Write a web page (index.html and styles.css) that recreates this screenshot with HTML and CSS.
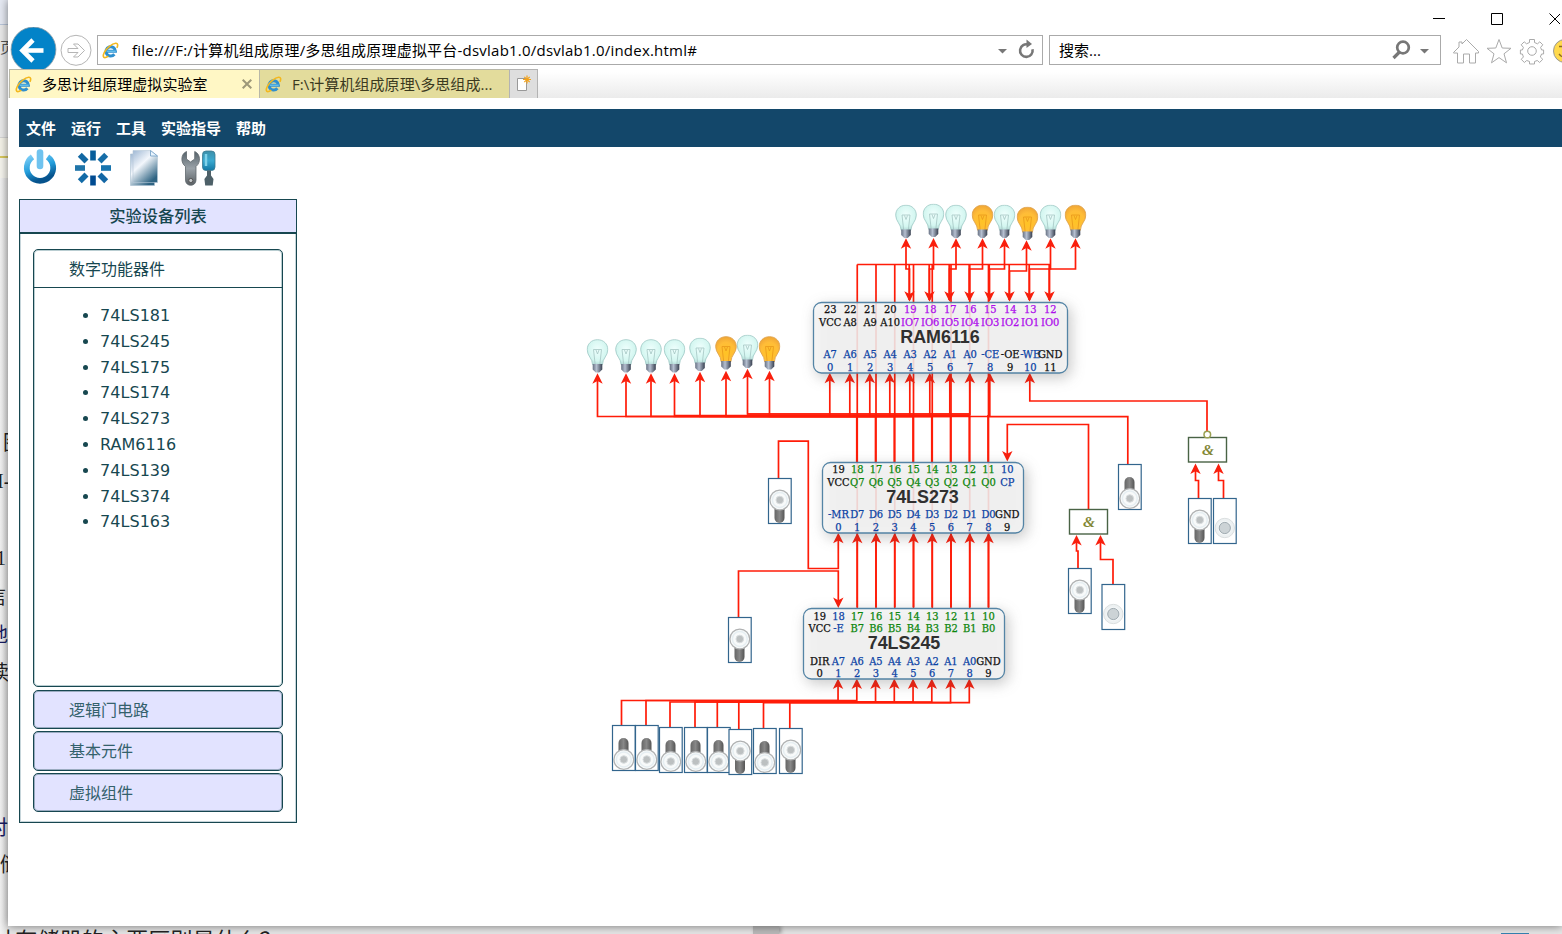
FILE: index.html
```
<!DOCTYPE html>
<html lang="zh-CN">
<head>
<meta charset="utf-8">
<title>多思计组原理虚拟实验室</title>
<link rel="stylesheet" href="styles.css">
</head>
<body>
<svg class="defs" width="0" height="0">
  <defs>
    <linearGradient id="blue" x1="0" y1="0" x2=".4" y2="1"><stop offset="0" stop-color="#7ccdf6"/><stop offset=".55" stop-color="#239edc"/><stop offset="1" stop-color="#06538d"/></linearGradient>
    <linearGradient id="steel" x1="0" y1="0" x2="0" y2="1"><stop offset="0" stop-color="#56636b"/><stop offset=".5" stop-color="#9aa2a8"/><stop offset="1" stop-color="#5a6064"/></linearGradient>
    <linearGradient id="page" x1="0" y1="0" x2=".7" y2="1"><stop offset="0" stop-color="#9fb8d4"/><stop offset=".45" stop-color="#f3f7fc"/><stop offset="1" stop-color="#2f6483"/></linearGradient>
    <linearGradient id="driver" x1="0" y1="0" x2="0" y2="1"><stop offset="0" stop-color="#3d8fa9"/><stop offset=".5" stop-color="#3aa9d0"/><stop offset="1" stop-color="#1278a5"/></linearGradient>
    <radialGradient id="glassOff" cx=".5" cy=".4" r=".6"><stop offset="0" stop-color="#effffd"/><stop offset=".75" stop-color="#d3f6f0"/><stop offset="1" stop-color="#b5dcd8"/></radialGradient>
    <radialGradient id="glassOn" cx=".5" cy=".65" r=".7"><stop offset="0" stop-color="#ffc324"/><stop offset=".6" stop-color="#ffbd38"/><stop offset="1" stop-color="#eda136"/></radialGradient>
    <linearGradient id="cap" x1="0" x2="1"><stop offset="0" stop-color="#687284"/><stop offset=".4" stop-color="#b5bfd0"/><stop offset="1" stop-color="#394151"/></linearGradient>
    <linearGradient id="slot" x1="0" x2="1"><stop offset="0" stop-color="#666"/><stop offset=".5" stop-color="#888"/><stop offset="1" stop-color="#555"/></linearGradient>
    <symbol id="ie" viewBox="0 0 18 18"><path d="M4.800 9.800h9.400a5 4.900 0 1 0-1.100 3.200" fill="none" stroke="#2f8fce" stroke-width="3.200"/><path d="M5 9.800h9.500" stroke="#62bdeb" stroke-width="1.600"/><path d="M15.800 6.300c1.500-3.200.900-5.200-1.300-5C10.600 1.700 4.800 6.500 2.500 11c-1.900 3.700-1.300 6 1.300 5.400 1-.200 2-.800 2.900-1.400" fill="none" stroke="#f3b81e" stroke-width="1.700"/></symbol>
    <symbol id="bulb-off" viewBox="0 0 22 34"><path d="M11 .7C4.800.700.700 5.100.700 10.700c0 6.200 5.300 8.600 5.400 15h9.800c.100-6.400 5.400-8.800 5.400-15C21.300 5.100 17.200.700 11 .700z" fill="url(#glassOff)" stroke="#a5cdca" stroke-width=".9"/><path d="M8.600 25 7 10.500h8L13.400 25M9.500 11l1.500 4 1.500-4" fill="none" stroke="#a5c5c3" stroke-width=".8"/><path d="M6.200 25h9.600v5.400L12.700 33.500H9.300L6.200 30.400z" fill="url(#cap)"/></symbol>
    <symbol id="bulb-on" viewBox="0 0 22 34"><path d="M11 .7C4.800.700.700 5.100.700 10.700c0 6.200 5.300 8.600 5.400 15h9.800c.100-6.400 5.400-8.800 5.400-15C21.300 5.100 17.200.700 11 .700z" fill="url(#glassOn)" stroke="#dfa34c" stroke-width=".9"/><path d="M8.600 25 7 10.500h8L13.400 25M9.500 11l1.500 4 1.500-4" fill="none" stroke="#e8981a" stroke-width=".8"/><path d="M6.200 25h9.600v5.400L12.700 33.500H9.300L6.200 30.400z" fill="url(#cap)"/></symbol>
    <symbol id="knob" viewBox="-11 -11 22 22"><circle r="9.900" fill="#f8fafa" stroke="#b0b2b3" stroke-width="1.300"/><circle r="7.400" fill="none" stroke="#e6eef2" stroke-width="1.500"/><circle r="3.800" fill="#bcc0c1" stroke="#d8dcde"/></symbol>
    <symbol id="push" viewBox="-11 -11 22 22"><circle r="9.700" fill="#edf1f2" stroke="#dadedf"/><circle r="6.900" fill="#f4f7f8"/><circle r="5.600" fill="#ccd3d6" stroke="#a0abb1"/></symbol>
  </defs>
</svg>

<div class="desktop">
  <div class="desktop-head"></div>
  <div class="desktop-line"></div>
  <span class="frag small" style="top:38px;left:0">页</span>
  <span class="frag" style="top:429px;left:3px">图</span>
  <span class="frag" style="top:467px;left:-3px">I-</span>
  <span class="frag" style="top:544px;left:-4px">1</span>
  <span class="frag" style="top:583px;left:-14px">信</span>
  <span class="frag navy" style="top:621px;left:-12px">地</span>
  <span class="frag" style="top:659px;left:-11px">读</span>
  <span class="frag navy" style="top:814px;left:-12px">对</span>
  <span class="frag" style="top:851px;left:0">储</span>
  <span class="frag below" style="top:926px;left:-7px">址存储器的主要区别是什么？</span>
  <div class="desktop-scroll"></div>
  <div class="desktop-mark"></div>
</div>

<div class="window">
  <header class="chrome">
    <div class="caption">
      <svg width="133" height="16" viewBox="0 0 133 16" fill="none" stroke="#000"><path d="M6 6.500h12M64.500 1.500h11v11h-11zM122.500 1.500l11 11M133.500 1.500l-11 11"/></svg>
    </div>
    <div class="address-row">
      <svg class="nav" width="88" height="44" viewBox="0 0 88 44"><circle cx="25.500" cy="22.500" r="22.400" fill="#0383c8" stroke="#8a9ba5" stroke-width=".8"/><path d="M35.500 23.500H15" stroke="#fff" stroke-width="4.600"/><path d="M25 13 14.500 23.500 25 34" fill="none" stroke="#fff" stroke-width="4.600"/><circle cx="68" cy="23.300" r="15" fill="#fff" stroke="#b5b5b5"/><path d="M60 21.500h10l-4.500-4.500H70l6.500 6.500L70 30h-4.500l4.500-4.500H60z" fill="#fff" stroke="#b5b5b5"/></svg>
      <div class="field address">
        <svg width="17" height="17"><use href="#ie"/></svg>
        <span class="url">file:///F:/计算机组成原理/多思组成原理虚拟平台-dsvlab1.0/dsvlab1.0/index.html#</span>
        <svg width="42" height="22" viewBox="0 0 42 22"><path d="M2 10h9l-4.500 4.500z" fill="#777"/><path d="M32.500 5.700a6.300 6.300 0 1 0 4 4.600" fill="none" stroke="#777" stroke-width="2.600"/><path d="M30.500.500v8.500l5.500-4z" fill="#777"/></svg>
      </div>
      <div class="field search">
        <span>搜索...</span>
        <svg width="42" height="22" viewBox="2 0 42 22"><circle cx="13" cy="8.500" r="5.800" fill="none" stroke="#777" stroke-width="2.700"/><path d="M9.500 13 3.500 19" stroke="#777" stroke-width="3.200"/><path d="M30 10h9l-4.500 4.500z" fill="#777"/></svg>
      </div>
      <svg class="tools" width="112" height="30" viewBox="1450 36 112 30" fill="#fff" stroke="#aaa"><path d="M1453.500 52.500 1459 47v-5h3v2l4.500-4.500 12 12v1.500h-3v10h-6v-9h-6v9h-6v-10h-4z"/><path d="m1499 39.500 3.200 8.500 8.800.300-7 5.500 2.500 9-7.500-5.200-7.500 5.200 2.500-9-7-5.500 8.800-.300z"/><path d="M1529.500 42.500v-3h5v3l3 1.300 2.300-2 3 3-2.200 2.600 1 2.600h2v4h-2l-1.300 3 2.500 2.300-3.200 3.200-2.300-2-2.800 1v2.500h-5v-2.500l-2.800-1-2.300 2-3.200-3.200 2.200-2.300-1-3h-2v-4h2l1-2.600-2.200-2.600 3-3 2.300 2z"/><circle cx="1532" cy="51" r="4.300"/><circle cx="1565" cy="51" r="11.500" fill="#ffd94d" stroke="#999"/><path d="M1559 46.500h4M1559 54q3 4 7 3" fill="none" stroke="#8a6724" stroke-width="1.300"/></svg>
    </div>
    <div class="tabs">
      <div class="tab active"><svg width="17" height="17"><use href="#ie"/></svg><span>多思计组原理虚拟实验室</span><svg class="close" width="10" height="10" viewBox="0 0 10 10"><path d="m.7.700 8.600 8.600M9.300.700.700 9.300" stroke="#9d9879" stroke-width="2"/></svg></div>
      <div class="tab"><svg width="17" height="17"><use href="#ie"/></svg><span>F:\计算机组成原理\多思组成...</span></div>
      <div class="newtab"><svg width="16" height="18" viewBox="0 0 16 18"><path d="M1.500 3.500h9v12h-9z" fill="#fff" stroke="#999"/><path d="M11 .500v8M7 4.500h8M8.300 1.800l5.400 5.400M13.700 1.800 8.300 7.200" stroke="#f3a21a" stroke-width="1.200"/></svg></div>
    </div>
  </header>

  <main class="page">
    <nav class="menu"><span>文件</span><span>运行</span><span>工具</span><span>实验指导</span><span>帮助</span></nav>
    <div class="body">
      <div class="left">
        <div class="toolbar">
          <svg width="34" height="38" viewBox="0 0 34 38"><path d="M9.500 7.800a13.200 13.200 0 1 0 15 0" fill="none" stroke="url(#blue)" stroke-width="5.800"/><path d="M17 2v17" stroke="#fff" stroke-width="9"/><path d="M17 3.500V17" stroke="#70c3ef" stroke-width="6.600" stroke-linecap="round"/></svg>
          <svg width="36" height="38" viewBox="-18 -19 36 38" stroke-width="5.600"><g stroke="#075e9b"><path d="M0-17.500v10"/><path d="M13.200-13.200 6.500-6.500" stroke="#176ea8"/><path d="M18 0H8" stroke="#1774ae"/><path d="M13.200 13.200 6.500 6.500" stroke="#1467a5"/><path d="M0 17.500v-10" stroke="#004b91"/><path d="M-13.200 13.200-6.500 6.500" stroke="#126ba7"/><path d="M-18 0H-8" stroke="#2075a9"/><path d="M-13.200-13.200-6.500-6.500" stroke="#1268a3"/></g></svg>
          <svg width="30" height="38" viewBox="0 0 30 38"><path d="M1.500 5h20l4 4v27.500h-24z" fill="url(#page)" stroke="#a9c0d0" stroke-width=".6"/><path d="M4 1.500h17.500L28.500 7v26.500H4z" fill="url(#page)" stroke="#b5c8d6" stroke-width=".6"/><path d="M21.500 1.500V7h7z" fill="#eaf5fe" stroke="#6d9cc4" stroke-width=".8"/></svg>
          <svg width="36" height="38" viewBox="0 0 36 38"><path d="M5.500 2.500v7.500l4 3 4.200-3V2.500c6 2.500 6.300 11 1.300 15v13.500c0 7-10.500 7-10.500 0V17.500C-.500 14-.500 5 5.500 2.500z" fill="url(#steel)" stroke="#60686d" stroke-width=".8"/><circle cx="9.800" cy="31.500" r="2.100" fill="#c3c8ca" stroke="#555"/><rect x="21.500" y="2" width="12.500" height="19.500" rx="3.500" fill="url(#driver)" stroke="#3b7a90" stroke-width=".8"/><path d="M25 5v12" stroke="#7fd2ea" stroke-width="2.500"/><path d="M26 21.500h4v5l2.500 3.500-.8 6.500h-7.500l-.8-6.500 2.600-3.500z" fill="#4d6068"/></svg>
        </div>
        <aside class="panel">
          <h2>实验设备列表</h2>
          <div class="accordion">
            <section class="open"><h3>数字功能器件</h3>
              <ul><li>74LS181</li><li>74LS245</li><li>74LS175</li><li>74LS174</li><li>74LS273</li><li>RAM6116</li><li>74LS139</li><li>74LS374</li><li>74LS163</li></ul>
            </section>
            <h3 class="shut">逻辑门电路</h3>
            <h3 class="shut">基本元件</h3>
            <h3 class="shut">虚拟组件</h3>
          </div>
        </aside>
      </div>
      <svg class="canvas" id="canvas" width="1265" height="779" viewBox="297 147 1265 779"></svg>
    </div>
  </main>
</div>
<script src="script.js"></script>
</body>
</html>
```
FILE: styles.css
```
* { box-sizing: border-box; }
body { margin: 0; width: 1562px; height: 934px; overflow: hidden; position: relative; background: #e8e8e8; font-family: "Open Sans", "Noto Sans CJK SC", sans-serif; }
.defs { position: absolute; }
.desktop { position: absolute; inset: 0; overflow: hidden; background: linear-gradient(90deg, #f3f3f3, #e2e2e2 8px, #e6e6e6 9px); }
.desktop-head { height: 138px; background: linear-gradient(#e6eaf3 0 24px, #b9c6da 24px 25px, #eaeaea 25px 137px, #d5d5d5 137px); }
.desktop-line { height: 40px; background: linear-gradient(#f5f3e9 0 18px, #d8c85e 18px 20px, #f6f5ee 20px); }
.frag { position: absolute; font: 20px/28px "Liberation Serif", "Noto Sans CJK SC", serif; color: #222; white-space: nowrap; }
.frag.small { font-size: 15px; line-height: 20px; color: #555; }
.frag.navy { color: #171b62; }
.frag.below { font-size: 22px; line-height: 30px; letter-spacing: .2px; }
.desktop-scroll { position: absolute; left: 753px; top: 926px; width: 26px; height: 8px; background: #bababa; box-shadow: 2px 0 4px #999; }
.desktop-mark { position: absolute; left: 1501px; top: 933px; width: 28px; height: 1px; background: #3683b2; }
.window { position: absolute; left: 8px; top: 0; width: 1554px; height: 926px; background: #fff; box-shadow: 0 0 9px rgba(0,0,0,.5); overflow: hidden; }
.chrome { height: 98px; display: flex; flex-direction: column; background: linear-gradient(#fff 72px, #ebebeb 98px); }
.caption { height: 27px; display: flex; justify-content: flex-end; padding-top: 12px; flex: none; }
.caption svg { display: block; margin-right: 2px; }
.address-row { display: flex; height: 42px; flex: none; overflow: hidden; }
.nav { flex: none; margin-right: 1px; }
.field { display: flex; align-items: center; height: 30px; margin-top: 8px; border: 1px solid #aaa; background: #fff; font-size: 15px; line-height: 28px; color: #000; }
.address { width: 946px; padding: 0 4px; }
.url { flex: 1; margin-left: 13px; white-space: nowrap; letter-spacing: .22px; }
.search { width: 392px; margin-left: 6px; padding: 0 6px 0 9px; justify-content: space-between; }
.tools { margin: 9px 0 0 9px; flex: none; }
.tabs { display: flex; height: 29px; padding-left: 1px; }
.tab { display: flex; align-items: center; width: 250px; border: 1px solid #b8b7a8; border-bottom: 0; border-right: 0; background: #e3dc9c; padding: 0 6px 0 5px; font-size: 15px; color: #3b391f; white-space: nowrap; }
.tab span { margin: -2px 0 0 10px; flex: 1; letter-spacing: .05px; }
.tab.active { background: #fff7c5; color: #000; }
.tab .close { margin-right: 1px; }
.newtab { width: 29px; border: 1px solid #b3b3b3; border-bottom: 0; background: #dedede; display: flex; align-items: center; justify-content: center; }
.page { padding: 11px 0 0 11px; }
.menu { display: flex; gap: 15px; height: 38px; padding-left: 7px; align-items: center; background: #13476a; color: #fff; font: bold 15px/38px "Noto Sans CJK SC", sans-serif; }
.body { display: flex; }
.left { width: 278px; flex: none; }
.toolbar { display: flex; height: 52px; padding: 2px 0 0 4px; }
.toolbar svg { margin-right: 18px; }
.toolbar svg:nth-child(3) { margin-right: 22px; }
.panel { height: 624px; border: 1px solid #174750; box-shadow: inset 0 0 0 1px #c6d5da; font-family: "DejaVu Sans", "Noto Sans CJK SC", sans-serif; color: #174750; }
.panel h2 { margin: 0; height: 34px; background: #e2e3ff; border-bottom: 2px solid #174750; text-align: center; font: 500 16.300px/30px "Noto Sans CJK SC", sans-serif; }
.accordion { padding: 15px 13px 0; display: flex; flex-direction: column; gap: 2px; }
.accordion h3 { margin: 0; padding-left: 35px; font: 16px/36px "Noto Sans CJK SC", sans-serif; }
.open { height: 438px; margin-bottom: 1px; border: 1px solid #174750; box-shadow: inset 0 0 0 1px #b9cdd1; border-radius: 5px; }
.open h3 { height: 38px; border-bottom: 1px solid #174750; }
.open ul { margin: 15px 0 0; padding: 0 0 0 66px; font-size: 16px; line-height: 25.800px; letter-spacing: .05px; }
.accordion .shut { height: 39px; border: 1px solid #174750; box-shadow: inset 0 0 0 1px #9aabc0; border-radius: 5px; background: #e2e3ff; color: #34616c; }
.accordion .shut:nth-of-type(2) { height: 40px; }
.canvas { display: block; flex: none; }
.wire { fill: none; stroke: #ff1c08; stroke-width: 1.700; }
.head { fill: #f91f0d; }
.chip { fill: #f7f7f7; fill-opacity: .83; stroke: #5484a5; stroke-width: 1.300; }
.shade { filter: drop-shadow(3px 4px 7px rgba(70,70,70,.34)); }
.pin { font: 11px "DejaVu Serif Condensed", "DejaVu Serif", serif; text-anchor: middle; stroke-width: .25; }
.black { fill: #111; stroke: #111; }
.blue { fill: #0c43a5; stroke: #0c43a5; }
.green { fill: #0c860c; stroke: #0c860c; }
.purple { fill: #ad0cec; stroke: #ad0cec; }
.name { font: bold 17.900px "Liberation Sans", sans-serif; fill: #303030; text-anchor: middle; }
.box { fill: #fff; stroke: #32658d; stroke-width: 1.200; }
.gate { fill: #fff; stroke: #496345; stroke-width: 1.400; }
.amp { font: bold italic 15.500px "Liberation Serif", serif; fill: #838737; text-anchor: middle; }
```
FILE: script.js
```
const canvas = document.getElementById('canvas');
const NS = 'http://www.w3.org/2000/svg';
function add(tag, attrs, text) {
  const node = document.createElementNS(NS, tag);
  for (const key in attrs) node.setAttribute(key, attrs[key]);
  if (text !== undefined) node.textContent = text;
  canvas.appendChild(node);
  return node;
}
function wire(...points) { add('polyline', { class: 'wire', points: points.join(' ') }); }
function up(x, y) { add('path', { class: 'head', d: `M${x} ${y}l5.200 10.500-5.200-2.700-5.200 2.700z` }); }
function down(x, y) { add('path', { class: 'head', d: `M${x} ${y}l5.200-10.500-5.200 2.700-5.200-2.700z` }); }

const ramX = i => 830.200 + 20 * i;
const regX = i => 838.500 + 18.750 * i;
const busX = i => 819.700 + 18.750 * i;

// Output lamps of the memory chip
const topLamps = [[906,205,0],[933.500,204,0],[956,205,0],[982.500,205,1],[1004.500,205,0],[1027.500,207,1],[1050.500,205,0],[1075.500,205,1]];
const topPins = [4, 5, 6, 7, 8, 9, 11, 10];
topLamps.forEach(([x, y], i) => {
  const target = ramX(topPins[i]) - .7;
  const bend = i === 5 ? 271 : 269;
  const end = i === 5 ? x - 1 : x;
  wire(end, y + 40, end, bend, target, bend, target, 300);
  up(end, i === 1 ? 238 : y + 33.200);
});
wire(857.200, 264.500, 1050, 264.500);
for (let i = 0; i < 8; i++) {
  wire(regX(i + 1), 264.500, regX(i + 1), 607);
  wire(ramX(i + 4) - 1, 264.500, ramX(i + 4) - 1, 300);
  down(ramX(i + 4) - .7, 301.800);
}

// Address lamps
const sideLamps = [[597.500,339.500,0],[626,339.500,0],[651,339.500,0],[674.500,339.500,0],[700,338,0],[726,336.500,1],[747.500,335,0],[769.500,336.500,1]];
sideLamps.forEach(([x, y], i) => {
  const rail = i === 6 ? 414 : 416.500;
  wire(x, y + 38, x, rail, regX(i + 1), rail);
  up(x, i === 7 || i === 5 ? 370.800 : y + 33.800);
});
wire(674, 415.500, 970, 415.500);
wire(747, 414, 970, 414);
for (let i = 0; i < 8; i++) {
  wire(ramX(i) - .4, 375, ramX(i) - .4, 415);
  up(ramX(i) - .4, 372.800);
  wire(regX(i + 1) - .5, 415, regX(i + 1) - .5, 462);
  wire(regX(i + 1), 535, regX(i + 1), 608);
  up(regX(i + 1), 532.800);
}

// Control lines
wire(1127.800, 464, 1127.800, 416.700, 989.800, 416.700, 989.800, 375); up(989.800, 372.800);
wire(1207, 431, 1207, 401, 1029.800, 401, 1029.800, 375); up(1029.800, 372.800);
wire(1088.500, 509, 1088.500, 424.500, 1007.300, 424.500, 1007.300, 456); down(1007.300, 461.500);
wire(778.500, 478, 778.500, 441.200, 808.300, 441.200, 808.300, 568.500, 838.300, 568.500, 838.300, 535); up(838.300, 532.800);
wire(738.500, 617, 738.500, 571, 838.300, 571, 838.300, 604); down(838.300, 608);
wire(1198.500, 498, 1198.500, 480.500, 1195.500, 480.500, 1195.500, 466); up(1195.500, 463.500);
wire(1223.500, 498, 1223.500, 480.500, 1218.500, 480.500, 1218.500, 466); up(1218.500, 463.500);
wire(1078, 568, 1078, 551, 1076.500, 551, 1076.500, 540); up(1076.500, 535);
wire(1113, 584, 1113, 559.500, 1100.500, 559.500, 1100.500, 540); up(1100.500, 535);

// Data switches
[621.500, 646, 670, 695, 717.300, 738.800, 763.500, 789.800].forEach((x, i) => {
  const rail = i < 2 ? 700.500 : i < 6 ? 702 : 702.700;
  const target = busX(i + 1) - .4;
  wire(x, 729, x, rail, target, rail, target, 682);
  up(target, 678.500);
});

function chip(x, y, width, name, titleX, pinX, top, bottom, rows) {
  add('rect', { class: 'chip shade', x, y, width, height: 70.500, rx: 8 });
  const line = (items, row, side) => items.forEach(([number, label, color], i) => {
    add('text', { class: 'pin ' + color, x: pinX(i), y: rows[row] }, side ? label : number);
    add('text', { class: 'pin ' + color, x: pinX(i), y: rows[row + 1] }, side ? number : label);
  });
  line(top, 0, false);
  line(bottom, 2, true);
  add('text', { class: 'name', x: titleX, y: rows[4] }, name);
}
const pins = (labels, colors, numberAt) => labels.split(' ').map((label, i) => [numberAt(i), label, { k: 'black', b: 'blue', g: 'green', p: 'purple' }[colors[i]]]);
chip(813.500, 302.500, 254, 'RAM6116', 940, ramX,
  pins('VCC A8 A9 A10 IO7 IO6 IO5 IO4 IO3 IO2 IO1 IO0', 'kkkkpppppppp', i => 23 - i),
  pins('A7 A6 A5 A4 A3 A2 A1 A0 -CE -OE -WE GND', 'bbbbbbbbbkbk', i => i), [313, 326, 358, 371, 343]);
chip(822.500, 462.500, 201, '74LS273', 922.500, regX,
  pins('VCC Q7 Q6 Q5 Q4 Q3 Q2 Q1 Q0 CP', 'kggggggggb', i => 19 - i),
  pins('-MR D7 D6 D5 D4 D3 D2 D1 D0 GND', 'bbbbbbbbbk', i => i), [473, 486, 518, 531, 503]);
chip(803.500, 608.500, 201, '74LS245', 904, busX,
  pins('VCC -E B7 B6 B5 B4 B3 B2 B1 B0', 'kbgggggggg', i => 19 - i),
  pins('DIR A7 A6 A5 A4 A3 A2 A1 A0 GND', 'kbbbbbbbbk', i => i), [620, 632, 665, 677, 649]);

[...topLamps, ...sideLamps].forEach(([x, y, on]) => add('use', { href: on ? '#bulb-on' : '#bulb-off', x: x - 11, y: y - .5, width: 22, height: 34 }));

function device(x, y, kind) {
  add('rect', { class: 'box', x: x + .5, y: y + .5, width: 22.700, height: 45 });
  if (kind !== 'push') add('rect', { x: x + 6.500, y: y + (kind === 'low' ? 13 : 25), width: 10, height: 20, rx: 5, fill: 'url(#slot)' });
  add('use', { href: kind === 'push' ? '#push' : '#knob', x: x + .800, y: y + (kind === 'low' ? 23.500 : kind === 'push' ? 19 : 11), width: 22, height: 22 });
}
[[612,725,'low'],[635,725,'low'],[659,727,'low'],[684,727,'low'],[707,727,'low'],[728.500,729,'high'],[753,728,'low'],[779,728,'high'],
 [768,478,'high'],[728,617,'high'],[1118,464,'low'],[1188,498,'high'],[1213,498,'push'],[1068,568,'high'],[1101.500,584,'push']].forEach(d => device(...d));

[[1188.500, 437.500], [1069.500, 509.500]].forEach(([x, y]) => {
  add('rect', { class: 'gate', x, y, width: 38, height: 24.500 });
  add('text', { class: 'amp', x: x + 19.500, y: y + 17.500 }, '&');
});
add('circle', { cx: 1207.300, cy: 434.500, r: 3.300, fill: '#fff', stroke: '#9aa052', 'stroke-width': 1.500 });
```
